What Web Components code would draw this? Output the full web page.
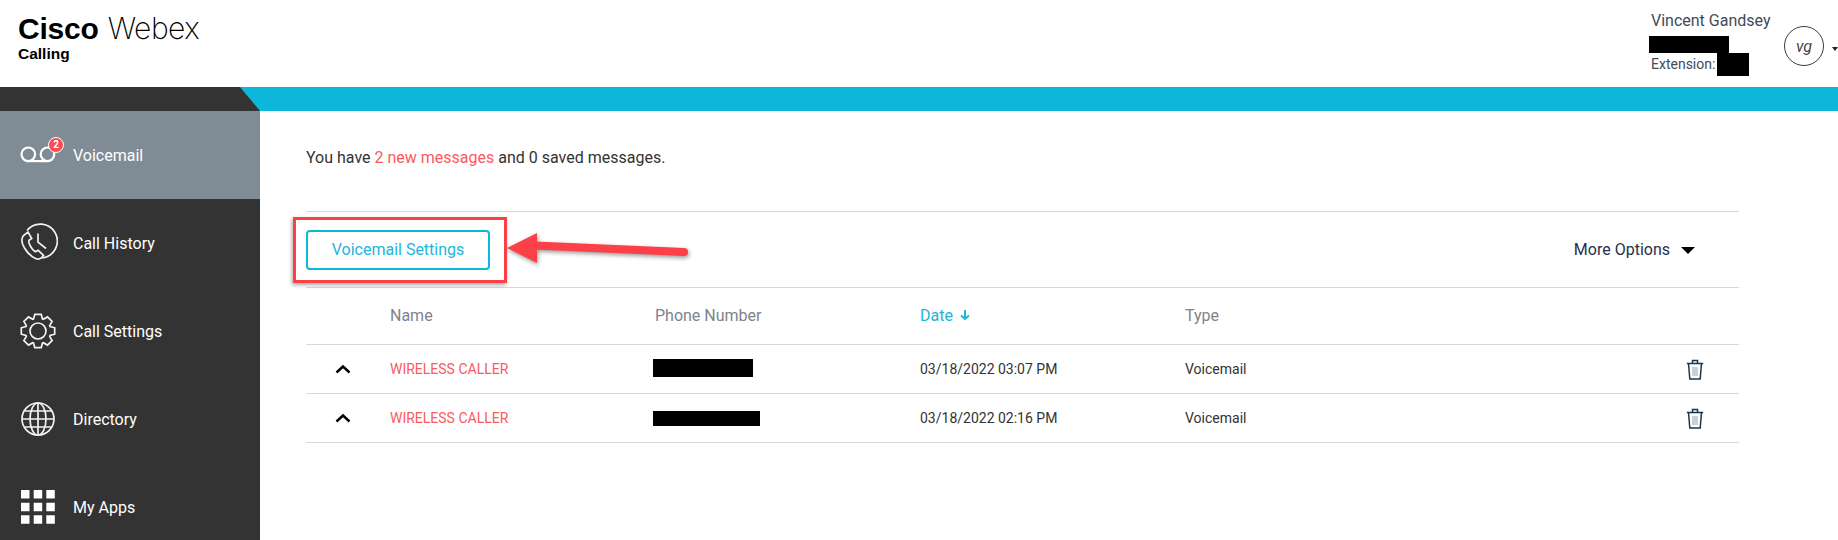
<!DOCTYPE html>
<html>
<head>
<meta charset="utf-8">
<title>Webex Calling</title>
<style>
  html, body { margin: 0; height: 100%; overflow: hidden; background: #fff; }
  body { font-family: Roboto, "Liberation Sans", sans-serif; }
</style>
</head>
<body>
<webex-app>
  <app-header slot="header" name="Vincent Gandsey" initials="vg"></app-header>
  <side-nav slot="nav">
    <nav-item icon="voicemail" badge="2" active>Voicemail</nav-item>
    <nav-item icon="history">Call History</nav-item>
    <nav-item icon="gear">Call Settings</nav-item>
    <nav-item icon="globe">Directory</nav-item>
    <nav-item icon="apps">My Apps</nav-item>
  </side-nav>
  <voicemail-page slot="main">
    <voicemail-row name="WIRELESS CALLER" date="03/18/2022 03:07 PM" type="Voicemail" redact="100,18,-1"></voicemail-row>
    <voicemail-row name="WIRELESS CALLER" date="03/18/2022 02:16 PM" type="Voicemail" redact="107,15,0"></voicemail-row>
  </voicemail-page>
</webex-app>

<script>
class WebexApp extends HTMLElement {
  constructor() {
    super();
    this.attachShadow({ mode: "open" });
    this.shadowRoot.innerHTML = /* html */`
    <style>
      :host { display: block; width: 1838px; height: 540px; overflow: hidden; }
      .band { height: 24px; background: #0db7d9; }
      .band div { width: 260px; height: 24px; background: #333; clip-path: polygon(0 0, 240px 0, 100% 100%, 0 100%); }
      .body { display: flex; height: 429px; }
    </style>
    <slot name="header"></slot>
    <div class="band"><div></div></div>
    <div class="body">
      <slot name="nav"></slot>
      <slot name="main"></slot>
    </div>`;
  }
}

class AppHeader extends HTMLElement {
  constructor() {
    super();
    this.attachShadow({ mode: "open" });
  }

  connectedCallback() {
    this.shadowRoot.innerHTML = /* html */`
    <style>
      :host { display: flex; height: 87px; justify-content: space-between; color: #000; overflow: hidden; }
      .logo { padding: 13px 0 0 18px; font-family: "Liberation Sans", sans-serif; }
      .brand { font-size: 30px; line-height: 31px; white-space: nowrap; }
      .brand b { font-weight: 700; margin-right: 9px; letter-spacing: -0.2px; }
      .brand span { font-family: Inter, "Liberation Sans", sans-serif; font-weight: 200; letter-spacing: -0.5px; }
      .product { font-size: 15.500px; font-weight: 700; line-height: 18px; margin-top: 1px; }
      .user { display: flex; color: #3f4a5a; }
      .info { width: 135px; padding-top: 11px; font-size: 14px; }
      .name { padding-left: 2px; font-size: 16px; line-height: 20px; height: 25px; }
      .phone { width: 80px; height: 17px; background: #000; }
      .ext { display: flex; padding-left: 2px; height: 23px; line-height: 23px; }
      .ext i { width: 32px; height: 23px; background: #000; margin-left: 2px; }
      .avatar { width: 40px; height: 40px; box-sizing: border-box; margin-top: 26px; border: 1px solid #3c3c3c; border-radius: 50%; display: flex; align-items: center; justify-content: center; font-style: italic; font-size: 16px; color: #444; }
      .caret { width: 0; height: 0; margin: 47px 0 0 8px; border: 3.500px solid transparent; border-top: 4px solid #222; border-bottom: 0; }
    </style>
    <div class="logo">
      <div class="brand"><b>Cisco</b><span>Webex</span></div>
      <div class="product">Calling</div>
    </div>
    <div class="user">
      <div class="info">
        <div class="name">${this.getAttribute("name")}</div>
        <div class="phone"></div>
        <div class="ext">Extension:<i></i></div>
      </div>
      <div class="avatar">${this.getAttribute("initials")}</div>
      <div class="caret"></div>
    </div>`;
  }
}

class SideNav extends HTMLElement {
  constructor() {
    super();
    this.attachShadow({ mode: "open" });
    this.shadowRoot.innerHTML = /* html */`
    <style>
      :host { display: block; flex: none; width: 260px; height: 429px; background: #333; overflow: hidden; }
    </style>
    <slot></slot>`;
  }
}

// outline of the settings cog, 8 teeth round the middle of a 40x40 box
function gearPath() {
  let d = "";
  for (let t = 0; t < 8; t++) {
    const a = (t * Math.PI) / 4 - Math.PI / 2;
    const pts = [[-0.36, 12.8], [-0.19, 17], [0.19, 17], [0.36, 12.8]];
    pts.forEach(([da, r]) => {
      const x = 20 + r * Math.cos(a + da);
      const y = 20 + r * Math.sin(a + da);
      d += (d ? "L" : "M") + x.toFixed(1) + " " + y.toFixed(1);
    });
  }
  return d + "Z";
}

const NAV_ICONS = {
  voicemail: `<circle cx="10.300" cy="19.300" r="6.800"/><circle cx="29.500" cy="19.300" r="6.800"/><path d="M10.300 26.100h19.200"/>`,
  history: `<path d="M9 7.500A17 17 0 1 1 24 35"/><path d="M20 10.500v8.700l8 6.300"/>
    <path d="M5.500 12.500C3 15.500 3.500 20 6.500 25c2.700 4.500 6.500 8.500 11 10.500 2.700 1.200 5 .7 7-1.800l1-1.400-5.300-5-2.700 1.500c-2-1-4-3.500-5.500-6.500-1-2-1.500-4-1-5l2.700-1.800L10 9z"/>`,
  gear: `<path d="${gearPath()}"/><circle cx="20" cy="20" r="8"/>`,
  globe: `<circle cx="20" cy="20" r="16"/><ellipse cx="20" cy="20" rx="8" ry="16"/><path d="M20 4v32M4 20h32M6.500 12h27M6.500 28h27"/>`,
  apps: `<path fill="#fff" stroke="none" d="M3 3h8.500v8.500H3zM15.700 3h8.500v8.500h-8.500zM28.300 3h8.500v8.500h-8.500zM3 15.700h8.500v8.500H3zM15.700 15.700h8.500v8.500h-8.500zM28.300 15.700h8.500v8.500h-8.500zM3 28.300h8.500v8.500H3zM15.700 28.300h8.500v8.500h-8.500zM28.300 28.300h8.500v8.500h-8.500z"/>`
};

class NavItem extends HTMLElement {
  constructor() {
    super();
    this.attachShadow({ mode: "open" });
  }

  connectedCallback() {
    const badge = this.getAttribute("badge");
    this.shadowRoot.innerHTML = /* html */`
    <style>
      :host { display: flex; align-items: center; height: 88px; padding-left: 18px; color: #fff; font-size: 16px; }
      :host([active]) { background: #808c95; }
      .icon { position: relative; width: 40px; height: 40px; margin-right: 15px; }
      svg { display: block; fill: none; stroke: #f2f2f2; stroke-width: 1.700; }
      :host([active]) svg { stroke-width: 2.200; stroke: #fff; }
      .badge { position: absolute; left: 30px; top: 2px; width: 14px; height: 14px; border: 1px solid #fff; border-radius: 50%; background: #fb4b53; color: #fff; font-size: 10px; font-weight: 700; line-height: 14px; text-align: center; }
    </style>
    <div class="icon">
      <svg width="40" height="40" viewBox="0 0 40 40">${NAV_ICONS[this.getAttribute("icon")]}</svg>
      ${badge ? `<div class="badge">${badge}</div>` : ""}
    </div>
    <slot></slot>`;
  }
}

class VoicemailPage extends HTMLElement {
  constructor() {
    super();
    this.attachShadow({ mode: "open" });
    this.shadowRoot.innerHTML = /* html */`
    <style>
      :host { display: block; position: relative; flex: 1; padding: 0 99px 0 46px; color: #333; font-size: 14px; }
      .summary { height: 100px; box-sizing: border-box; padding-top: 37px; line-height: 20px; font-size: 16px; }
      .summary em { font-style: normal; color: #fb5a60; }
      .toolbar { display: flex; align-items: center; justify-content: space-between; height: 75px; border-top: 1px solid #d8d8d8; border-bottom: 1px solid #d8d8d8; padding-right: 44px; }
      button { width: 184px; height: 40px; background: #fff; border: 2px solid #0db7d9; border-radius: 4px; color: #25b4da; font: inherit; font-size: 16px; }
      .more { display: flex; align-items: center; color: #26304a; font-size: 16px; }
      .more i { width: 0; height: 0; margin-left: 11px; margin-top: 2px; border: 7px solid transparent; border-top: 7px solid #000; border-bottom: 0; }
      .head { display: grid; grid-template-columns: 84px 265px 265px 265px 1fr; align-items: center; height: 54px; padding-bottom: 2px; border-bottom: 1px solid #d8d8d8; color: #7d848d; font-size: 16px; }
      .date { color: #1eb4d8; display: flex; align-items: center; }
      .date svg { margin-left: 6px; }
      .mark { position: absolute; left: 33px; top: 106px; width: 214px; height: 66px; box-sizing: border-box; border: 3px solid #fb4048; box-shadow: -1px 2px 4px rgba(0,0,0,.35); }
      .arrow { position: absolute; left: 245px; top: 118px; filter: drop-shadow(1px 2px 2px rgba(0,0,0,.4)); }
    </style>
    <div class="summary">You have <em>2 new messages</em> and 0 saved messages.</div>
    <div class="toolbar">
      <button>Voicemail Settings</button>
      <div class="more">More Options<i></i></div>
    </div>
    <div class="head">
      <span></span><span>Name</span><span>Phone Number</span>
      <span class="date">Date<svg width="12" height="12" viewBox="0 0 12 12" fill="none" stroke="#1eb4d8" stroke-width="2"><path d="M6 1v9M2 6.500 6 10l4-3.500"/></svg></span>
      <span>Type</span>
    </div>
    <slot></slot>
    <div class="mark"></div>
    <svg class="arrow" width="200" height="50" viewBox="0 0 200 50">
      <path d="M30 16.500 179 23" fill="none" stroke="#fb4048" stroke-width="8" stroke-linecap="round"/>
      <path d="M2 19 32 4V34Z" fill="#fb4048"/>
    </svg>`;
  }
}

class VoicemailRow extends HTMLElement {
  constructor() {
    super();
    this.attachShadow({ mode: "open" });
  }

  connectedCallback() {
    const [w, h, dy] = this.getAttribute("redact").split(",");
    this.shadowRoot.innerHTML = /* html */`
    <style>
      :host { display: grid; grid-template-columns: 84px 265px 265px 265px 1fr 53px; align-items: center; height: 48px; border-bottom: 1px solid #d8d8d8; color: #333; font-size: 14px; }
      .chev { padding-left: 29px; display: flex; }
      .name { color: #fb5a60; }
      .redact { background: #000; margin-left: -2px; position: relative; }
      .trash { display: flex; }
    </style>
    <div class="chev"><svg width="16" height="10" viewBox="0 0 16 10" fill="none" stroke="#000" stroke-width="2.400"><path d="M1.500 8.500 8 2.500l6.500 6"/></svg></div>
    <div class="name">${this.getAttribute("name")}</div>
    <div><div class="redact" style="width:${w}px;height:${h}px;top:${dy}px"></div></div>
    <div>${this.getAttribute("date")}</div>
    <div>${this.getAttribute("type")}</div>
    <div class="trash"><svg width="18" height="21" viewBox="0 0 18 21" fill="none" stroke="#17394f" stroke-width="1.500"><path d="M.8 4.500h16.400M2.500 4.500l1.300 15.500h10.400l1.300-15.500M6.500 4.500V1.500h5v3"/><path stroke-width=".8" stroke="#7b8b96" d="M7 8v9M9 8v9M11 8v9"/></svg></div>`;
  }
}

customElements.define("webex-app", WebexApp);
customElements.define("app-header", AppHeader);
customElements.define("side-nav", SideNav);
customElements.define("nav-item", NavItem);
customElements.define("voicemail-page", VoicemailPage);
customElements.define("voicemail-row", VoicemailRow);
</script>
</body>
</html>
